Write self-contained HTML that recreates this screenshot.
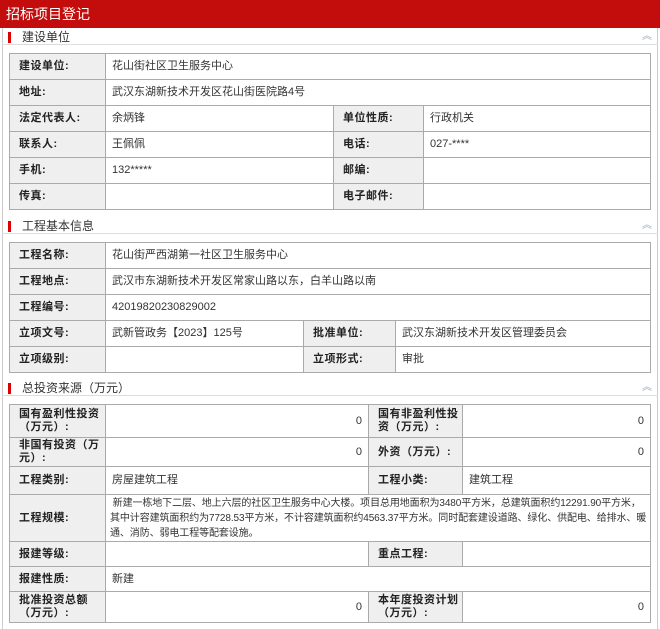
<!DOCTYPE html>
<html><head><meta charset="utf-8"><style>
*{margin:0;padding:0;box-sizing:border-box}
body{width:660px;height:629px;background:#fff;font-family:"Liberation Sans","Noto Sans CJK SC",sans-serif;font-size:11px;color:#333;position:relative;overflow:hidden}
.top{position:absolute;left:0;top:0;width:660px;height:28px;background:#c30d0d;color:#fff;font-size:14px;line-height:28px;padding-left:6px}
.panel{position:absolute;left:2px;right:2px;border-left:1px solid #ccc;border-right:1px solid #ccc}
.sec{position:absolute;left:2px;width:656px;height:16px;border-bottom:1px solid #ddd;font-size:12px;line-height:16px;padding-left:20px;color:#333}
.sec:before{content:"";position:absolute;left:6px;top:3px;width:3px;height:11px;background:#d00}
.sec .ar{position:absolute;right:6px;top:0;color:#9ab;font-size:10px}
table{position:absolute;left:9px;width:642px;border-collapse:collapse;table-layout:fixed}
td{border:1px solid #aaa;padding:0 6px;vertical-align:middle;line-height:13px}
td.l{background:#efefef;font-weight:bold;padding-left:9px;padding-right:2px;letter-spacing:0.5px;color:#222}
td.r{text-align:right}
</style></head><body>
<div class="top">招标项目登记</div>
<div class="panel" style="top:28px;height:601px"></div>
<div class="sec" style="top:29px">建设单位<span class="ar">︽</span></div>
<table style="top:53px">
<colgroup><col style="width:96px"><col style="width:228px"><col style="width:90px"><col></colgroup>
<tr style="height:26px"><td class="l">建设单位:</td><td colspan="3">花山街社区卫生服务中心</td></tr>
<tr style="height:26px"><td class="l">地址:</td><td colspan="3">武汉东湖新技术开发区花山街医院路4号</td></tr>
<tr style="height:26px"><td class="l">法定代表人:</td><td>余炳锋</td><td class="l">单位性质:</td><td>行政机关</td></tr>
<tr style="height:26px"><td class="l">联系人:</td><td>王佩佩</td><td class="l">电话:</td><td>027-****</td></tr>
<tr style="height:26px"><td class="l">手机:</td><td>132*****</td><td class="l">邮编:</td><td></td></tr>
<tr style="height:26px"><td class="l">传真:</td><td></td><td class="l">电子邮件:</td><td></td></tr>
</table>
<div class="sec" style="top:218px">工程基本信息<span class="ar">︽</span></div>
<table style="top:242px">
<colgroup><col style="width:96px"><col style="width:198px"><col style="width:92px"><col></colgroup>
<tr style="height:26px"><td class="l">工程名称:</td><td colspan="3">花山街严西湖第一社区卫生服务中心</td></tr>
<tr style="height:26px"><td class="l">工程地点:</td><td colspan="3">武汉市东湖新技术开发区常家山路以东，白羊山路以南</td></tr>
<tr style="height:26px"><td class="l">工程编号:</td><td colspan="3">42019820230829002</td></tr>
<tr style="height:26px"><td class="l">立项文号:</td><td>武新管政务【2023】125号</td><td class="l">批准单位:</td><td>武汉东湖新技术开发区管理委员会</td></tr>
<tr style="height:26px"><td class="l">立项级别:</td><td></td><td class="l">立项形式:</td><td>审批</td></tr>
</table>
<div class="sec" style="top:380px">总投资来源（万元）<span class="ar">︽</span></div>
<table style="top:404px">
<colgroup><col style="width:96px"><col style="width:263px"><col style="width:94px"><col></colgroup>
<tr style="height:33px"><td class="l">国有盈利性投资（万元）:</td><td class="r">0</td><td class="l">国有非盈利性投资（万元）:</td><td class="r">0</td></tr>
<tr style="height:29px"><td class="l">非国有投资（万元）:</td><td class="r">0</td><td class="l">外资（万元）:</td><td class="r">0</td></tr>
<tr style="height:28px"><td class="l">工程类别:</td><td>房屋建筑工程</td><td class="l">工程小类:</td><td>建筑工程</td></tr>
<tr style="height:47px"><td class="l">工程规模:</td><td colspan="3" style="line-height:15px;font-size:10px;letter-spacing:-0.1px;padding-left:4px;padding-right:2px">&nbsp;新建一栋地下二层、地上六层的社区卫生服务中心大楼。项目总用地面积为3480平方米，总建筑面积约12291.90平方米，其中计容建筑面积约为7728.53平方米，不计容建筑面积约4563.37平方米。同时配套建设道路、绿化、供配电、给排水、暖通、消防、弱电工程等配套设施。</td></tr>
<tr style="height:25px"><td class="l">报建等级:</td><td></td><td class="l">重点工程:</td><td></td></tr>
<tr style="height:25px"><td class="l">报建性质:</td><td colspan="3">新建</td></tr>
<tr style="height:31px"><td class="l">批准投资总额（万元）:</td><td class="r">0</td><td class="l">本年度投资计划（万元）:</td><td class="r">0</td></tr>
</table>
</body></html>
